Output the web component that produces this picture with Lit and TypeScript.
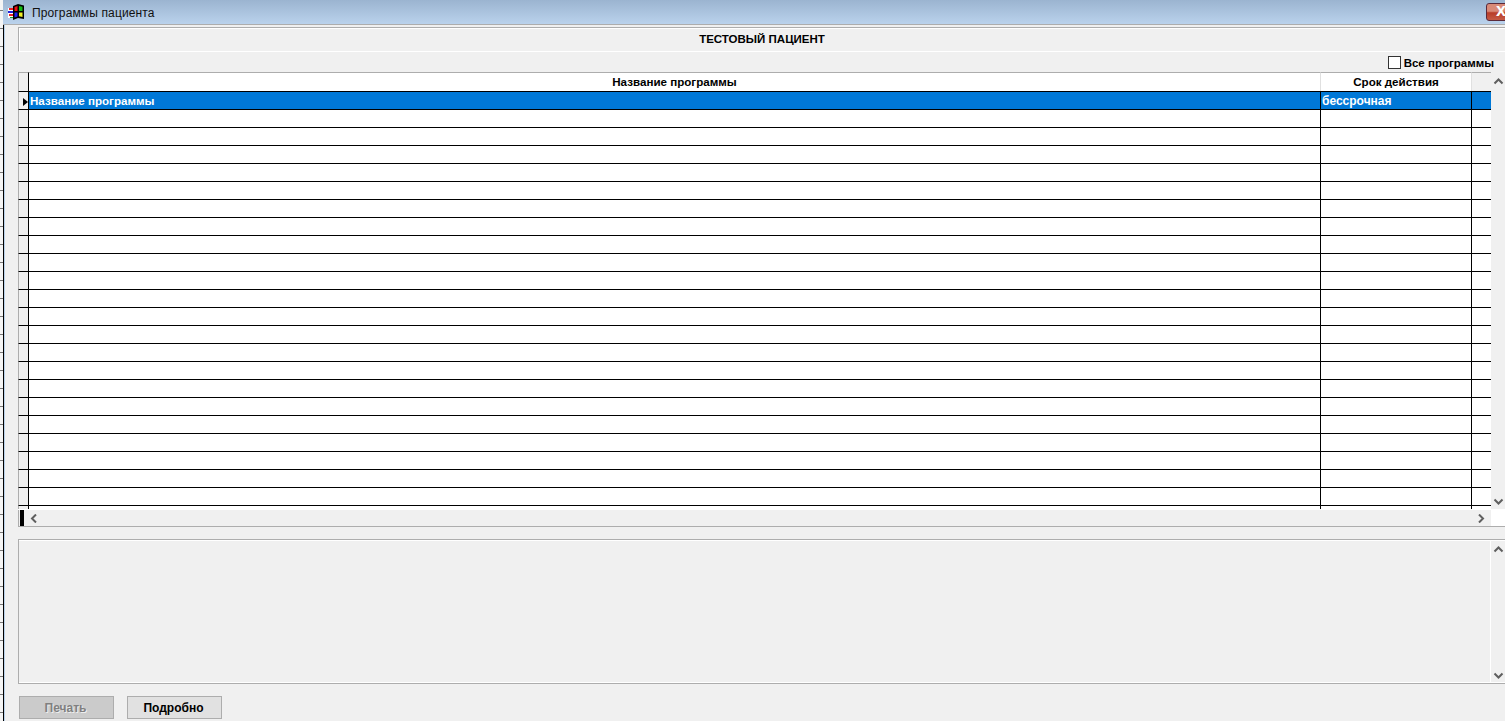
import { LitElement, html, css } from "lit";
import { customElement } from "lit/decorators.js";

const chevron = (d: string) => html`<svg class="chev" width="11" height="9" viewBox="0 0 11 9"><path d=${d} fill="none" stroke="#5f5f5f" stroke-width="2"/></svg>`;
const UP = "M1.5 6.5L5.5 2.5L9.5 6.5";
const DOWN = "M1.5 2.5L5.5 6.5L9.5 2.5";
const LEFT = "M7 .5L3 4.5L7 8.5";
const RIGHT = "M4 .5L8 4.5L4 8.5";

@customElement("app-root")
export class AppRoot extends LitElement {
  static styles = css`
    :host { display: block; width: 1505px; height: 721px; overflow: hidden; font-family: "Liberation Sans", Arial, sans-serif; font-size: 11.6px; color: #000; }
    .desk { display: flex; height: 721px; }
    .strip { width: 3px; flex: none; background: repeating-linear-gradient(#f4f4f4 0 10px, #777 10px 11px, #f4f4f4 11px 18px); }
    .win { flex: 1; min-width: 0; display: flex; flex-direction: column; background: #f0f0f0; }
    .title { height: 25px; flex: none; box-sizing: border-box; display: flex; align-items: center; background: linear-gradient(#9bb4d0, #bad2ec); border-bottom: 1px solid #adadad; position: relative; font-size: 12px; color: #111; }
    .title .logo { margin-left: 5px; width: 17px; height: 16px; flex: none; }
    .title .t { margin-left: 7px; letter-spacing: .13px; margin-top: 1px; }
    .close { position: absolute; right: -15px; top: 3px; width: 34px; height: 18px; box-sizing: border-box; border: 1px solid #5b2a3a; border-radius: 3px; background: linear-gradient(#d98a78 0 45%, #b83c28 55%, #c55a45); color: #fff; font-weight: bold; font-size: 18px; line-height: 13px; padding-left: 9px; }
    .body { flex: 1; display: flex; flex-direction: column; padding: 2px 0 0 14px; min-height: 0; border-left: 1px solid #000; box-shadow: inset 1px 0 0 #b9d1ea; }
    .patient { height: 25px; box-sizing: border-box; flex: none; padding-bottom: 2px; border: 1px solid #fff; border-top-color: #adadad; border-left-color: #adadad; border-right: none; display: flex; align-items: center; justify-content: center; font-weight: bold; font-size: 11.5px; box-shadow: inset 1px 1px 0 #fff; }
    .opts { height: 20px; flex: none; display: flex; justify-content: flex-end; align-items: center; gap: 3px; padding: 1px 11px 0 0; box-sizing: border-box; font-weight: bold; font-size: 11.5px; }
    .cb { width: 11px; height: 11px; border: 1px solid #333; background: #fff; }
    .gridwrap { display: grid; grid-template-columns: 1fr 14px; flex: none; height: 437px; }
    .grid { display: grid; grid-template-columns: 10px 1292px 151px 1fr; grid-template-rows: 19px; grid-auto-rows: 18px; background: #fff; height: 437px; overflow: hidden; align-content: start; }
    .c { box-sizing: border-box; border-top: 1px solid #000; border-left: 1px solid #000; padding-left: 1px; line-height: 18px; white-space: nowrap; }
    .ind { background: #f0f0f0; border-top: 1px solid #000; box-sizing: border-box; border-left: 1px solid #adadad; position: relative; }
    .h { box-sizing: border-box; background: #fff; border-top: 1px solid #adadad; border-left: 1px solid #e0e0e0; text-align: center; font-weight: bold; line-height: 18px; }
    .h.c0 { background: #f0f0f0; border-left: 1px solid #adadad; }
    .h.c1 { border-left: 1px solid #000; }
    .h.c3 { background: #f0f0f0; }
    .sel { background: #0078d7; color: #fff; font-weight: bold; }
    .sel.wide { font-size: 12px; }
    .arrow { position: absolute; left: 4px; top: 6px; width: 0; height: 0; border-left: 5px solid #000; border-top: 4px solid transparent; border-bottom: 4px solid transparent; }
    .vs { background: #f0f0f0; display: flex; flex-direction: column; justify-content: space-between; align-items: center; padding: 5px 0 3px; }
    .hs { height: 18px; flex: none; display: grid; grid-template-columns: 1fr 14px; background: #fff; box-sizing: border-box; border-bottom: 1px solid #adadad; }
    .hs .track { background: #f0f0f0; margin-top: 1px; border-left: 1px solid #adadad; display: flex; align-items: center; padding: 0 5px 0 1px; gap: 5px; }
    .hs .thumb { width: 4px; height: 16px; background: #000; margin-top: -1px; }
    .hs .sp { flex: 1; }
    .memo { margin-top: 12px; height: 145px; flex: none; box-sizing: border-box; display: grid; grid-template-columns: 1fr 14px; border-top: 1px solid #adadad; border-left: 1px solid #adadad; border-bottom: 1px solid #adadad; box-shadow: inset 0 1px 0 #fff, inset 0 -1px 0 #fff; }
    .memo .tx { border-right: 1px solid #fff; }
    .memo .vs { padding: 5px 0 3px; background: none; }
    .btns { display: flex; gap: 13px; padding: 12px 0 0 1px; }
    .btn { width: 95px; height: 23px; box-sizing: border-box; border: 1px solid #adadad; background: #e1e1e1; display: flex; align-items: center; justify-content: center; padding-right: 2px; font-weight: bold; font-size: 12px; }
    .btn.dis { background: #cbcbcb; color: #808080; text-shadow: 1px 1px 0 #eee; }
    .chev { display: block; }
  `;

  render() {
    const rows = Array.from({ length: 23 }, (_, i) => i);
    return html`<div class="desk">
      <div class="strip"></div>
      <div class="win">
        <div class="title">
          <svg class="logo" viewBox="0 0 17 16">
            <path d="M0 4h6v10H0z" fill="#fff"/>
            <path d="M1 4h4v2H1z" fill="#e22"/><path d="M0 7h5v2H0z" fill="#22d"/><path d="M1 10h4v2H1z" fill="#e22"/><path d="M2 13h3v1H2z" fill="#2a2"/>
            <path d="M5 2l5-2 6 1.500V15l-6-1-5 2z" fill="#000"/>
            <path d="M6.500 3l3-1v5h-3z" fill="#e11"/><path d="M11 2l3.500 .8V7H11z" fill="#1b1"/>
            <path d="M6.500 8.500h3v4l-3 1z" fill="#22e"/><path d="M11 8.500h3.500v4.500l-3.500-.7z" fill="#ee2"/>
          </svg>
          <span class="t">Программы пациента</span>
          <div class="close">x</div>
        </div>
        <div class="body">
          <div class="patient">ТЕСТОВЫЙ ПАЦИЕНТ</div>
          <div class="opts"><span class="cb"></span><span>Все программы</span></div>
          <div class="gridwrap">
            <div class="grid">
              <div class="h c0"></div>
              <div class="h c1">Название программы</div>
              <div class="h">Срок действия</div>
              <div class="h c3"></div>
              <div class="ind"><span class="arrow"></span></div>
              <div class="c sel">Название программы</div>
              <div class="c sel wide">бессрочная</div>
              <div class="c sel"></div>
              ${rows.map(() => html`<div class="ind"></div><div class="c"></div><div class="c"></div><div class="c"></div>`)}
            </div>
            <div class="vs">${chevron(UP)}${chevron(DOWN)}</div>
          </div>
          <div class="hs">
            <div class="track"><span class="thumb"></span>${chevron(LEFT)}<span class="sp"></span>${chevron(RIGHT)}</div>
            <div></div>
          </div>
          <div class="memo"><div class="tx"></div><div class="vs">${chevron(UP)}${chevron(DOWN)}</div></div>
          <div class="btns"><div class="btn dis">Печать</div><div class="btn">Подробно</div></div>
        </div>
      </div>
    </div>`;
  }
}
